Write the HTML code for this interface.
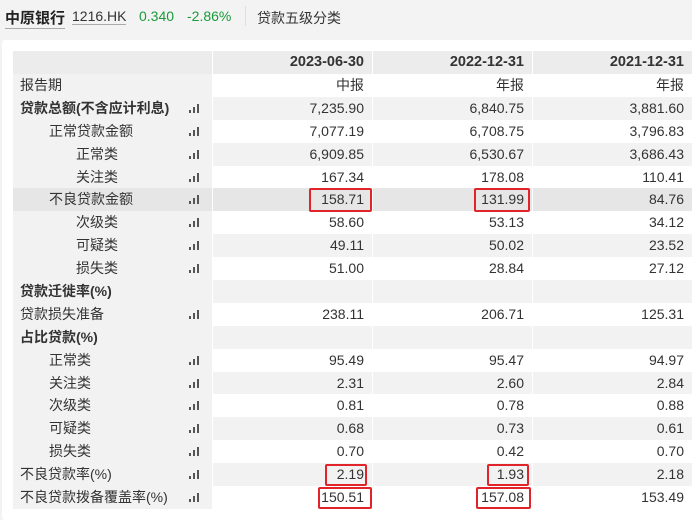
<!DOCTYPE html><html><head><meta charset="utf-8"><style>
body{margin:0;width:692px;height:504px;overflow:hidden;background:#f3f3f3;font-family:"Liberation Sans","Noto Sans CJK SC",sans-serif;color:#333}
.top{height:38px;position:relative;font-size:14px}
.top span{position:absolute;top:8px}
.panel{position:absolute;left:2px;top:40px;width:700px;height:480px;background:#fff;border-radius:3px}
.tb{position:absolute;left:13px;top:51px;width:679px;font-size:14px}
.r{height:22.9px;line-height:22.9px;display:flex;position:relative}
.r div{box-sizing:border-box;height:100%;white-space:nowrap}
.l{width:199px;background:#f2f2f2;position:relative;padding-left:7px}
.v{width:160px;text-align:right;padding-right:8px;border-left:1px solid #fff}
.r.g .v{background:#f2f2f2}
.r.h{height:23px;line-height:23px}
.r.h div{background:#ececec;font-weight:bold;font-size:14.5px}
.r.d div{background:#e6e6e6!important}
.b{font-weight:bold}
.i1{padding-left:36px!important}.i2{padding-left:63px!important}
.ic{position:absolute;left:176px;top:7px;width:11px;height:9px}
.ic i{position:absolute;bottom:0;width:2px;background:#555}
.ic i:nth-child(1){left:0;height:3px}.ic i:nth-child(2){left:4px;height:6px}.ic i:nth-child(3){left:8px;height:9px}
.rb{position:absolute;border:2px solid #e0242a;border-radius:2px;box-sizing:border-box}
</style></head><body>
<div class="top">
<span style="left:5px;font-weight:bold;font-size:15px;border-bottom:1px solid #aaa;top:7px;color:#222">中原银行</span>
<span style="left:72px;border-bottom:1px solid #aaa">1216.HK</span>
<span style="left:139px;color:#1a9a3a">0.340</span>
<span style="left:187px;color:#1a9a3a">-2.86%</span>
<span style="left:245px;top:6px;width:1px;height:20px;background:#ddd"></span>
<span style="left:257px">贷款五级分类</span>
</div>
<div class="panel"></div>
<div class="tb">
<div class="r h"><div class="l"></div><div class="v">2023-06-30</div><div class="v">2022-12-31</div><div class="v">2021-12-31</div></div>
<div class="r"><div class="l">报告期</div><div class="v">中报</div><div class="v">年报</div><div class="v">年报</div></div>
<div class="r g"><div class="l b">贷款总额(不含应计利息)<b class="ic"><i></i><i></i><i></i></b></div><div class="v">7,235.90</div><div class="v">6,840.75</div><div class="v">3,881.60</div></div>
<div class="r"><div class="l i1">正常贷款金额<b class="ic"><i></i><i></i><i></i></b></div><div class="v">7,077.19</div><div class="v">6,708.75</div><div class="v">3,796.83</div></div>
<div class="r g"><div class="l i2">正常类<b class="ic"><i></i><i></i><i></i></b></div><div class="v">6,909.85</div><div class="v">6,530.67</div><div class="v">3,686.43</div></div>
<div class="r"><div class="l i2">关注类<b class="ic"><i></i><i></i><i></i></b></div><div class="v">167.34</div><div class="v">178.08</div><div class="v">110.41</div></div>
<div class="r g d"><div class="l i1">不良贷款金额<b class="ic"><i></i><i></i><i></i></b></div><div class="v">158.71</div><div class="v">131.99</div><div class="v">84.76</div></div>
<div class="r"><div class="l i2">次级类<b class="ic"><i></i><i></i><i></i></b></div><div class="v">58.60</div><div class="v">53.13</div><div class="v">34.12</div></div>
<div class="r g"><div class="l i2">可疑类<b class="ic"><i></i><i></i><i></i></b></div><div class="v">49.11</div><div class="v">50.02</div><div class="v">23.52</div></div>
<div class="r"><div class="l i2">损失类<b class="ic"><i></i><i></i><i></i></b></div><div class="v">51.00</div><div class="v">28.84</div><div class="v">27.12</div></div>
<div class="r g"><div class="l b">贷款迁徙率(%)</div><div class="v"></div><div class="v"></div><div class="v"></div></div>
<div class="r"><div class="l">贷款损失准备<b class="ic"><i></i><i></i><i></i></b></div><div class="v">238.11</div><div class="v">206.71</div><div class="v">125.31</div></div>
<div class="r g"><div class="l b">占比贷款(%)</div><div class="v"></div><div class="v"></div><div class="v"></div></div>
<div class="r"><div class="l i1">正常类<b class="ic"><i></i><i></i><i></i></b></div><div class="v">95.49</div><div class="v">95.47</div><div class="v">94.97</div></div>
<div class="r g"><div class="l i1">关注类<b class="ic"><i></i><i></i><i></i></b></div><div class="v">2.31</div><div class="v">2.60</div><div class="v">2.84</div></div>
<div class="r"><div class="l i1">次级类<b class="ic"><i></i><i></i><i></i></b></div><div class="v">0.81</div><div class="v">0.78</div><div class="v">0.88</div></div>
<div class="r g"><div class="l i1">可疑类<b class="ic"><i></i><i></i><i></i></b></div><div class="v">0.68</div><div class="v">0.73</div><div class="v">0.61</div></div>
<div class="r"><div class="l i1">损失类<b class="ic"><i></i><i></i><i></i></b></div><div class="v">0.70</div><div class="v">0.42</div><div class="v">0.70</div></div>
<div class="r g"><div class="l">不良贷款率(%)<b class="ic"><i></i><i></i><i></i></b></div><div class="v">2.19</div><div class="v">1.93</div><div class="v">2.18</div></div>
<div class="r"><div class="l">不良贷款拨备覆盖率(%)<b class="ic"><i></i><i></i><i></i></b></div><div class="v">150.51</div><div class="v">157.08</div><div class="v">153.49</div></div>
</div>
<div class="rb" style="left:309px;top:188px;width:63px;height:24px"></div>
<div class="rb" style="left:474px;top:188px;width:56px;height:24px"></div>
<div class="rb" style="left:325px;top:464px;width:42px;height:22px"></div>
<div class="rb" style="left:487px;top:464px;width:42px;height:22px"></div>
<div class="rb" style="left:318px;top:487px;width:54px;height:22px"></div>
<div class="rb" style="left:476px;top:487px;width:55px;height:22px"></div>
</body></html>
